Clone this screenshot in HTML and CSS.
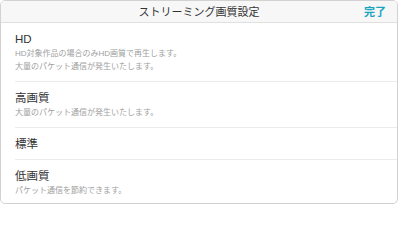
FILE: index.html
```html
<!DOCTYPE html>
<html lang="ja">
<head>
<meta charset="utf-8">
<link rel="stylesheet" href="styles.css">
</head>
<body>
<div class="card">
  <div class="header">
    <div class="title">ストリーミング画質設定</div>
    <div class="done">完了</div>
  </div>
  <div class="list">
    <div class="row">
      <div class="row-title">HD</div>
      <div class="row-desc">HD対象作品の場合のみHD画質で再生します。<br>大量のパケット通信が発生いたします。</div>
    </div>
    <div class="row">
      <div class="row-title">高画質</div>
      <div class="row-desc">大量のパケット通信が発生いたします。</div>
    </div>
    <div class="row">
      <div class="row-title">標準</div>
    </div>
    <div class="row last">
      <div class="row-title">低画質</div>
      <div class="row-desc">パケット通信を節約できます。</div>
    </div>
  </div>
</div>
</body>
</html>
```

FILE: styles.css
```css
html, body {
  margin: 0;
  padding: 0;
  background: #ffffff;
}
body {
  font-family: "Liberation Sans", "Noto Sans CJK JP", sans-serif;
  color: #333333;
}
.card {
  box-sizing: border-box;
  width: 398px;
  height: 204px;
  border: 1px solid #d2d2d2;
  border-radius: 5px;
  overflow: hidden;
  background: #ffffff;
}
.header {
  position: relative;
  height: 21px;
  background: #f7f7f7;
  border-bottom: 1px solid #e0e0e0;
  display: flex;
  align-items: center;
  justify-content: center;
}
.title {
  font-size: 11px;
  line-height: 14px;
  color: #333333;
  padding-top: 1px;
}
.done {
  position: absolute;
  right: 11px;
  top: 4px;
  font-size: 11px;
  line-height: 14px;
  font-weight: bold;
  color: #1ba4bf;
}
.list {
  display: flex;
  flex-direction: column;
}
.row {
  margin-left: 14px;
  padding: 9px 0 8px;
  border-bottom: 1px solid #ececec;
}
.row.last {
  border-bottom: none;
}
.row-title {
  font-size: 11.5px;
  line-height: 14px;
  color: #333333;
}
.row-desc {
  font-size: 8px;
  line-height: 13px;
  color: #a0a0a0;
  margin-top: 1px;
}
```
